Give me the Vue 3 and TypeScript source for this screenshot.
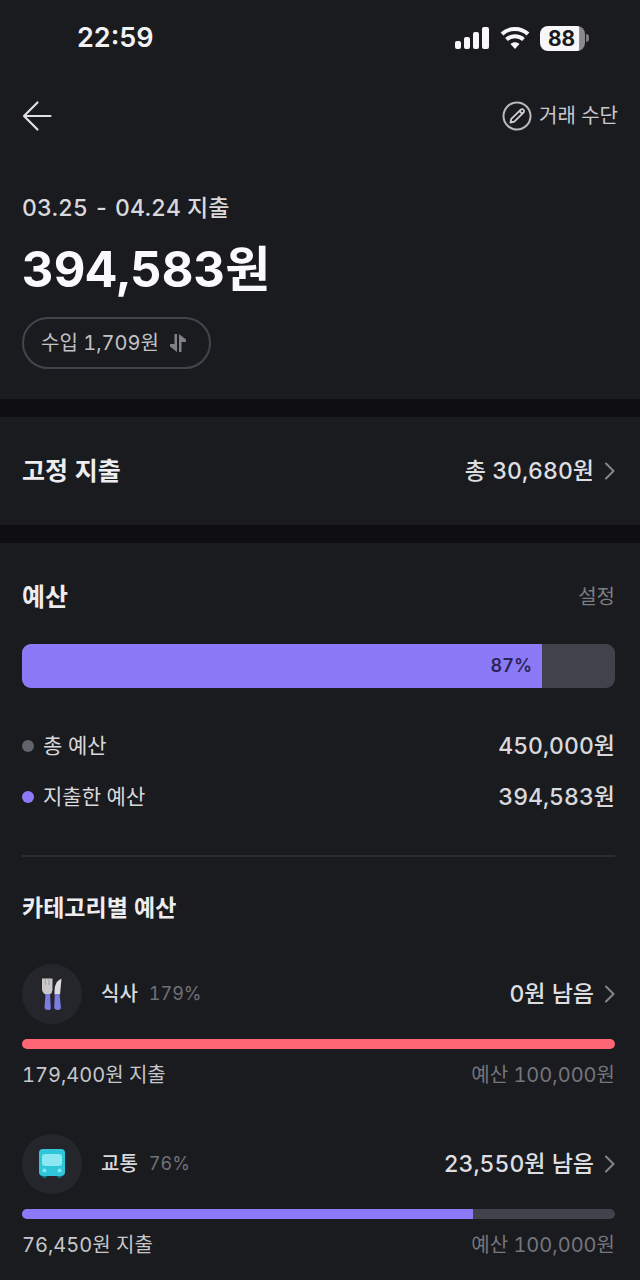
<script setup lang="ts">
interface Category {
  id: string
  name: string
  percent: number
  left: string
  spent: string
  budget: string
  over: boolean
}

const totalBudget = 450000
const totalSpent = 394583
const won = (value: number) => `${value.toLocaleString('en-US')}원`

const legend = [
  { label: '총 예산', value: won(totalBudget), tone: 'gray' },
  { label: '지출한 예산', value: won(totalSpent), tone: 'violet' },
]

const categories: Category[] = [
  { id: 'food', name: '식사', percent: 179, left: '0원 남음', spent: '179,400원 지출', budget: '예산 100,000원', over: true },
  { id: 'transit', name: '교통', percent: 76, left: '23,550원 남음', spent: '76,450원 지출', budget: '예산 100,000원', over: false },
]

const totalPercent = (totalSpent / totalBudget) * 100
const fill = (percent: number) => ({ width: `${Math.min(percent, 100)}%` })
</script>

<template>
  <div class="app">
    <div class="status">
      <span class="clock">22:59</span>
      <div class="indicators">
        <svg width="36" height="24" viewBox="0 0 36 24" aria-hidden="true">
          <rect x="1" y="15" width="6" height="8" rx="2" />
          <rect x="10" y="11" width="6" height="12" rx="2" />
          <rect x="19" y="6" width="6" height="17" rx="2" />
          <rect x="28" y="1" width="7" height="22" rx="2" />
        </svg>
        <svg width="30" height="24" viewBox="0 0 30 24" aria-hidden="true">
          <path d="M2 8C9 1.200 21 1.200 28 8" fill="none" stroke="#f7f7f9" stroke-width="4" />
          <path d="M6.500 13.500C11.200 9.200 18.800 9.200 23.500 13.500" fill="none" stroke="#f7f7f9" stroke-width="4" />
          <path d="M10.500 18C13 15.500 17 15.500 19.500 18L15 23Z" />
        </svg>
        <span class="battery"><span class="cell">88</span><span class="nub"></span></span>
      </div>
    </div>

    <header class="header">
      <button class="plain" type="button" aria-label="뒤로">
        <svg class="line" width="30" height="32" viewBox="0 0 30 32"><path d="M15.500 2.500L2 16L15.500 29.500M2 16H28.500" stroke="#e0e0e4" stroke-width="2.200" /></svg>
      </button>
      <button class="plain methods" type="button">
        <svg class="line" width="30" height="30" viewBox="0 0 30 30" aria-hidden="true">
          <circle cx="15" cy="15" r="13.500" stroke="#b9b9be" stroke-width="2" />
          <path d="M8.500 21.500L9.300 17.800L18.800 8.600Q20.100 7.500 21.400 8.700T21.700 11.400L12.300 20.700ZM17.500 10L20.300 12.800" stroke="#cfcfd3" stroke-width="1.800" />
        </svg>
        거래 수단
      </button>
    </header>

    <section class="summary">
      <p class="period">03.25 - 04.24 지출</p>
      <h1 class="amount">{{ won(totalSpent) }}</h1>
      <button class="income" type="button">
        수입 1,709원
        <svg width="18" height="20" viewBox="0 0 18 20" aria-hidden="true">
          <path d="M5.500 1H8V19L1 13.500V11H5.500ZM10 19H12.500V9H17V6.500L10 1Z" fill="#808086" />
        </svg>
      </button>
    </section>

    <section class="fixed">
      <h2 class="title">고정 지출</h2>
      <button class="plain go" type="button">
        총 30,680원
        <svg class="line" width="10" height="18" viewBox="0 0 10 18" aria-hidden="true"><path d="M1 1.500L8.500 9L1 16.500" stroke="#85858c" stroke-width="2" /></svg>
      </button>
    </section>

    <section class="budget">
      <div class="row head">
        <h2 class="title">예산</h2>
        <button class="plain setting" type="button">설정</button>
      </div>
      <div class="gauge">
        <div class="gauge-fill" :style="fill(totalPercent)">{{ Math.floor(totalPercent) }}%</div>
      </div>
      <dl class="legend">
        <div v-for="item in legend" :key="item.label" class="row">
          <dt><i class="dot" :class="item.tone"></i>{{ item.label }}</dt>
          <dd>{{ item.value }}</dd>
        </div>
      </dl>

      <h3 class="subtitle">카테고리별 예산</h3>
      <ul class="categories">
        <li v-for="c in categories" :key="c.id">
          <div class="row">
            <span class="badge">
              <svg v-if="c.id === 'food'" width="24" height="34" viewBox="0 0 24 34" aria-hidden="true">
                <path d="M2 1.500H12.500V12.500Q12.500 16 9.800 17.500H5Q2 15.500 2 12.500Z" fill="#c9c7c8" />
                <path d="M5.300 1.500V8M9 1.500V8" stroke="#a19fa2" stroke-width="1" />
                <path d="M21.500 1.500Q14.500 5 14.500 13V17.500H20Z" fill="#dddbdc" />
                <path d="M5.500 17H10L10.800 31Q10.800 33 8 33T4.500 31Z" fill="#7b7de0" />
                <path d="M14.800 17H19.500L21 31Q20.500 33 17.700 33T14.200 31Z" fill="#7b7de0" />
              </svg>
              <svg v-else width="30" height="32" viewBox="0 0 30 32" aria-hidden="true">
                <rect x="5" y="25" width="5" height="5" rx="2" fill="#137083" />
                <rect x="20" y="25" width="5" height="5" rx="2" fill="#137083" />
                <rect x="2" y="1" width="26" height="27" rx="4" fill="#31c5dc" />
                <rect x="5" y="6" width="20" height="12" rx="3" fill="#8ce8f2" />
                <circle cx="7.500" cy="22.500" r="2" fill="#7eeaf5" />
                <circle cx="22.500" cy="22.500" r="2" fill="#7eeaf5" />
              </svg>
            </span>
            <span class="name">{{ c.name }}</span>
            <span class="percent">{{ c.percent }}%</span>
            <button class="plain go" type="button">
              {{ c.left }}
              <svg class="line" width="10" height="18" viewBox="0 0 10 18" aria-hidden="true"><path d="M1 1.500L8.500 9L1 16.500" stroke="#85858c" stroke-width="2" /></svg>
            </button>
          </div>
          <div class="track"><div class="track-fill" :class="{ over: c.over }" :style="fill(c.percent)"></div></div>
          <div class="row caption"><span>{{ c.spent }}</span><span class="limit">{{ c.budget }}</span></div>
        </li>
      </ul>
    </section>
  </div>
</template>

<style>
html, body { background: #1a1b1f; }
</style>

<style scoped>
* { box-sizing: border-box; }
.app {
  background: #1a1b1f;
  color: #d9d9dd;
  font-family: Inter, "Noto Sans CJK KR", sans-serif;
  font-size: 22px;
  font-variant-numeric: tabular-nums;
  line-height: 32px;
}
h1, h2, h3, p, dl, dd, ul { margin: 0; padding: 0; }
ul { list-style: none; }
.row { display: flex; align-items: center; }
.plain {
  display: flex;
  align-items: center;
  padding: 0;
  border: 0;
  background: none;
  color: inherit;
  font: inherit;
  font-variant-numeric: inherit;
  white-space: nowrap;
  cursor: pointer;
}
.line { fill: none; stroke-linecap: round; stroke-linejoin: round; }

.status {
  display: flex;
  justify-content: space-between;
  align-items: center;
  height: 76px;
  padding: 0 51px 0 77px;
}
.clock { color: #f2f2f4; font-size: 27px; font-weight: 600; font-variant-numeric: normal; }
.indicators { display: flex; align-items: center; gap: 10px; fill: #f7f7f9; }
.battery { display: flex; align-items: center; gap: 1px; }
.cell {
  width: 45px;
  height: 25px;
  border-radius: 8px;
  background: linear-gradient(90deg, #f7f7f9 86%, #8a8a8e 88%);
  color: #1a1b1f;
  font-size: 21px;
  font-weight: 700;
  line-height: 25px;
  padding-right: 2px;
  text-align: center;
}
.nub { width: 3px; height: 8px; border-radius: 0 4px 4px 0; background: #7b7b80; }

.header {
  display: flex;
  justify-content: space-between;
  align-items: center;
  height: 80px;
  padding: 0 22px;
}
.methods { gap: 7px; color: #c9c9ce; font-size: 20px; }

.summary { padding: 36px 22px 30px; }
.period { font-size: 23px; font-weight: 500; }
.amount { margin-top: 14px; color: #fafafc; font-size: 49px; font-weight: 700; line-height: 64px; }
.income {
  display: flex;
  align-items: center;
  gap: 10px;
  height: 52px;
  margin-top: 15px;
  padding: 0 22px 0 17px;
  border: 2px solid #44454c;
  border-radius: 26px;
  background: none;
  color: #c2c2c7;
  font: inherit;
  font-size: 20px;
  font-variant-numeric: inherit;
  white-space: nowrap;
  cursor: pointer;
}

.fixed {
  display: flex;
  justify-content: space-between;
  align-items: center;
  height: 144px;
  padding: 0 25px 0 22px;
  border: solid #0f0f11;
  border-width: 18px 0;
}
.title { color: #ededf0; font-size: 25px; font-weight: 700; }
.go { gap: 11px; margin-left: auto; color: #dedee2; font-size: 23px; font-weight: 500; }

.budget { padding: 38px 25px 20px 22px; }
.head { justify-content: space-between; }
.setting { color: #7c7c83; font-size: 20px; }
.gauge { height: 44px; margin-top: 31px; border-radius: 9px; background: #41424b; overflow: hidden; }
.gauge-fill {
  height: 100%;
  padding-right: 10px;
  background: #8b7af8;
  color: #2b2454;
  font-size: 18px;
  font-weight: 600;
  line-height: 44px;
  text-align: right;
}
.legend { padding: 42px 0; border-bottom: 2px solid #2c2d33; }
.legend .row { justify-content: space-between; }
.legend .row + .row { margin-top: 19px; }
.legend dt { display: flex; align-items: center; gap: 9px; font-size: 21px; }
.legend dd { font-size: 23px; font-weight: 500; }
.dot { width: 12px; height: 12px; border-radius: 50%; }
.gray { background: #62636b; }
.violet { background: #8b7af8; }
.subtitle { margin: 35px 0 40px; color: #ededf0; font-size: 23px; font-weight: 700; }

.categories { display: grid; gap: 43px; }
.badge {
  display: grid;
  place-items: center;
  width: 60px;
  height: 60px;
  border-radius: 50%;
  background: #25262b;
}
.name { margin-left: 19px; font-size: 20px; font-weight: 500; }
.percent { margin-left: 11px; color: #707077; font-size: 18px; }
.track { height: 10px; margin-top: 15px; border-radius: 5px; background: #41424b; overflow: hidden; }
.track-fill { height: 100%; background: #8b7af8; }
.over { background: #ff6675; }
.caption { justify-content: space-between; margin-top: 10px; color: #c6c6cb; font-size: 20px; }
.limit { color: #75757c; }
</style>
